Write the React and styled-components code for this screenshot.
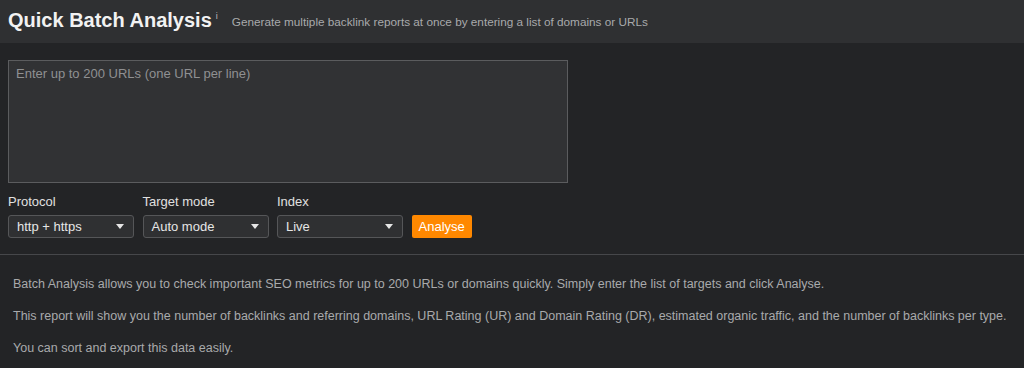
import React from "react";
import styled, { createGlobalStyle } from "styled-components";

const GlobalStyle = createGlobalStyle`
  html, body {
    margin: 0;
    padding: 0;
    background: #232426;
    font-family: "Liberation Sans", Arial, sans-serif;
  }
`;

const Page = styled.div`
  width: 1024px;
  height: 368px;
  background: #232426;
  overflow: hidden;
`;

const Header = styled.div`
  height: 43px;
  background: #2f3032;
  display: flex;
  align-items: center;
  padding: 0 8px;
  box-sizing: border-box;
`;

const Title = styled.h1`
  margin: 0;
  font-size: 20px;
  font-weight: bold;
  color: #f2f2f2;
  line-height: 1;
  position: relative;
  top: -2px;
`;

const Info = styled.sup`
  font-size: 9px;
  font-weight: normal;
  color: #bbb;
  margin-left: 4px;
  vertical-align: 8px;
`;

const Subtitle = styled.span`
  margin-left: 14px;
  font-size: 11.75px;
  color: #a9aaac;
`;

const Form = styled.div`
  padding: 17px 8px 16px;
`;

const Textarea = styled.textarea`
  display: block;
  width: 560px;
  height: 123px;
  box-sizing: border-box;
  background: #313234;
  border: 1px solid #5b5c5e;
  padding: 5px 7px;
  margin: 0;
  resize: none;
  font-family: "Liberation Sans", Arial, sans-serif;
  font-size: 13px;
  color: #ddd;
  outline: none;

  &::placeholder {
    color: #8f9092;
  }
`;

const Controls = styled.div`
  display: flex;
  align-items: flex-end;
  gap: 8.5px;
  margin-top: 11px;
`;

const Field = styled.div`
  display: flex;
  flex-direction: column;
  gap: 6px;
`;

const Label = styled.span`
  font-size: 13px;
  color: #e0e0e0;
  line-height: 15px;
`;

const SelectBox = styled.div`
  width: 126px;
  height: 23px;
  box-sizing: border-box;
  border: 1px solid #555658;
  border-radius: 3px;
  background: #2f3032;
  display: flex;
  align-items: center;
  justify-content: space-between;
  padding: 0 8px;
  font-size: 13px;
  color: #e6e6e6;
`;

const Caret = styled.span`
  width: 0;
  height: 0;
  border-left: 4px solid transparent;
  border-right: 4px solid transparent;
  border-top: 5px solid #e6e6e6;
  margin-right: 1px;
`;

const Button = styled.button`
  height: 23px;
  padding: 0 7px;
  border: none;
  border-radius: 2px;
  background: #ff8800;
  color: #fff;
  font-family: "Liberation Sans", Arial, sans-serif;
  font-size: 13px;
  cursor: pointer;
`;

const Divider = styled.hr`
  margin: 0;
  border: none;
  border-top: 1px solid #46474a;
`;

const Notes = styled.div`
  padding: 22px 13px 0;
`;

const Para = styled.p`
  margin: 0 0 18px;
  font-size: 12.5px;
  line-height: 14px;
  color: #a9aaac;
  white-space: nowrap;
`;

function Select({ value }) {
  return (
    <SelectBox>
      <span>{value}</span>
      <Caret />
    </SelectBox>
  );
}

export default function App() {
  return (
    <Page>
      <GlobalStyle />
      <Header>
        <Title>
          Quick Batch Analysis<Info>i</Info>
        </Title>
        <Subtitle>
          Generate multiple backlink reports at once by entering a list of domains or URLs
        </Subtitle>
      </Header>
      <Form>
        <Textarea placeholder="Enter up to 200 URLs (one URL per line)" />
        <Controls>
          <Field>
            <Label>Protocol</Label>
            <Select value="http + https" />
          </Field>
          <Field>
            <Label>Target mode</Label>
            <Select value="Auto mode" />
          </Field>
          <Field>
            <Label>Index</Label>
            <Select value="Live" />
          </Field>
          <Button>Analyse</Button>
        </Controls>
      </Form>
      <Divider />
      <Notes>
        <Para>
          Batch Analysis allows you to check important SEO metrics for up to 200 URLs or domains quickly. Simply enter the list of targets and click Analyse.
        </Para>
        <Para>
          This report will show you the number of backlinks and referring domains, URL Rating (UR) and Domain Rating (DR), estimated organic traffic, and the number of backlinks per type.
        </Para>
        <Para>You can sort and export this data easily.</Para>
      </Notes>
    </Page>
  );
}
